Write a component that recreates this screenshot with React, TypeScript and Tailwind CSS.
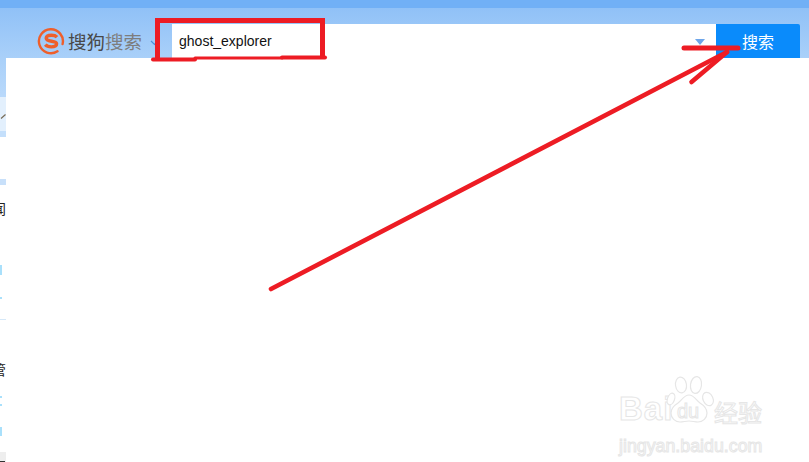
import React from 'react';

const stripMark = 'w-[2px] bg-[#a9e0fb]';

const SogouLogo = () => (
  <svg width="28" height="28" viewBox="0 0 28 28" className="shrink-0">
    <path d="M20.500 24.300A12 12 0 1 1 25.600 17" fill="none" stroke="#ee5f2b" strokeWidth="2.400" strokeLinecap="round" />
    <path d="M20 10.200c-1-1.100-3-1.900-5.600-1.900-3 0-5.200 1.200-5.200 3 0 4 10.400 1.900 10.400 5.500 0 1.900-2.200 3.100-5.300 3.100-2.600 0-4.800-.8-6-2.200" fill="none" stroke="#ee5f2b" strokeWidth="3.400" />
  </svg>
);

const PawIcon = () => (
  <svg width="50" height="52" viewBox="0 0 50 52" className="shrink-0" fill="#fff" stroke="#e6e6e6" strokeWidth="1.200">
    <ellipse cx="15" cy="10" rx="5.500" ry="8" transform="rotate(-8 15 10)" />
    <ellipse cx="30" cy="10" rx="5.500" ry="8.500" transform="rotate(8 30 10)" />
    <ellipse cx="42" cy="24" rx="5" ry="7" transform="rotate(-25 42 24)" />
    <ellipse cx="5" cy="24" rx="3.500" ry="6" transform="rotate(20 5 24)" />
    <path d="M23 20c5 0 7 5 11 8 4 2.500 7 6 7 10 0 5-4 9-9 9-3 0-6-1-9-1s-6 1-9 1c-5 0-9-4-9-9 0-4 3-7.500 7-10 4-3 6-8 11-8z" />
  </svg>
);

const Watermark = () => (
  <div className="absolute left-[619px] top-[375px] w-[150px] font-['Liberation_Sans',sans-serif] text-transparent [-webkit-text-stroke:1px_#e6e6e6]">
    <div className="flex items-end h-[52px]">
      <span className="text-[33px] leading-[36px] font-bold tracking-[1px] w-[54px] shrink-0">Bai</span>
      <div className="relative -ml-[7px] shrink-0">
        <PawIcon />
        <span className="absolute left-[11px] top-[25px] text-[20px] leading-[22px]">du</span>
      </div>
      <span className="-ml-[2px] text-[24px] leading-[30px] font-['Noto_Sans_CJK_SC',sans-serif]">经验</span>
    </div>
    <p className="mt-[9px] text-[17.800px] leading-[20px] whitespace-nowrap">jingyan.baidu.com</p>
  </div>
);

// red marker strokes drawn on top of the screenshot
const Annotations = () => (
  <svg width="809" height="462" className="absolute left-0 top-0 pointer-events-none" fill="none" stroke="#ed1c24" strokeLinecap="round" strokeLinejoin="round">
    <path d="M157.500 20.500H322.500V57" strokeWidth="5" strokeLinecap="butt" strokeLinejoin="miter" />
    <path d="M157.500 18V59" strokeWidth="5" strokeLinecap="butt" />
    <path d="M153 59.500H195" strokeWidth="4" />
    <path d="M195 58H282" strokeWidth="3" />
    <path d="M282 57.500H325" strokeWidth="4" />
    <path d="M271 289L727 52" strokeWidth="4.600" />
    <path d="M691.500 82L727 52" strokeWidth="4.600" />
    <path d="M684 48H738" strokeWidth="5" />
  </svg>
);

const LeftStrip = () => (
  <div className="w-[6px] shrink-0 flex flex-col overflow-hidden h-full bg-white font-['Noto_Sans_CJK_SC',sans-serif] text-[#222]">
    <div className="h-[39px] shrink-0 bg-gradient-to-b from-[#a9d0f9] to-[#b9d9fb]" />
    <div className="h-[34px] shrink-0 bg-[#e3f0fd] flex items-start justify-end pt-[16px]">
      <svg width="6" height="6" viewBox="0 0 6 6" className="shrink-0">
        <path d="M1 5.500L5.500 1.500" stroke="#776a55" strokeWidth="1.200" />
      </svg>
    </div>
    <div className="h-[6px] shrink-0 bg-[#c4dffb]" />
    <div className="h-[42px] shrink-0" />
    <div className="h-[6px] shrink-0 bg-[#c8e0fa]" />
    <div className="h-[15px] shrink-0" />
    <div className="h-[16px] shrink-0 flex justify-end text-[14px] leading-[16px]">
      <span className="shrink-0 w-[14px]">闻</span>
    </div>
    <div className="h-[49px] shrink-0" />
    <div className={`h-[10px] shrink-0 ${stripMark}`} />
    <div className="h-[22px] shrink-0" />
    <div className={`h-[2px] shrink-0 ${stripMark}`} />
    <div className="h-[20px] shrink-0" />
    <div className="h-px shrink-0 bg-[#d5e8f8]" />
    <div className="h-[41px] shrink-0" />
    <div className="h-[16px] shrink-0 flex justify-end text-[14px] leading-[16px]">
      <span className="shrink-0 w-[14px]">管</span>
    </div>
    <div className="h-[19px] shrink-0" />
    <div className={`h-[2px] shrink-0 ${stripMark}`} />
    <div className="h-[6px] shrink-0" />
    <div className={`h-[2px] shrink-0 ${stripMark}`} />
    <div className="h-[21px] shrink-0" />
    <div className={`h-[9px] shrink-0 ${stripMark}`} />
    <div className="h-[16px] shrink-0" />
    <div className="h-[12px] shrink-0 bg-[#eeeeee] flex items-end">
      <div className="w-[5px] h-px mb-[2px] bg-[#333]" />
    </div>
  </div>
);

const App: React.FC = () => {
  return (
    <div className="relative w-[809px] h-[462px] overflow-hidden bg-white flex flex-col font-['Liberation_Sans',sans-serif]">
      <div className="h-[8px] shrink-0 bg-[#71b0f6]" />
      <div className="h-[50px] shrink-0 flex items-end bg-gradient-to-b from-[#90c1f7] to-[#a9d0f9] pl-[37px] pr-[9px]">
        <div className="flex items-center self-start mt-[19px]">
          <SogouLogo />
          <span className="ml-[3px] text-[18.500px] leading-[28px] font-['Noto_Sans_CJK_SC',sans-serif] text-[#484848]">搜狗</span>
          <span className="text-[18.500px] leading-[28px] font-['Noto_Sans_CJK_SC',sans-serif] text-[#7d7d7d]">搜索</span>
          <svg width="10" height="6" viewBox="0 0 10 6" className="ml-[8px] mt-[3px] shrink-0">
            <path d="M1 1L4.500 4.500L8 1" fill="none" stroke="#4b8fd8" strokeWidth="1.200" />
          </svg>
        </div>
        <div className="ml-[12px] flex-1 h-[34px] bg-white flex items-center justify-between pl-[7px] pr-[11px]">
          <span className="text-[14px] leading-[18px] text-[#111]">ghost_explorer</span>
          <div className="w-0 h-0 border-x-[5px] border-x-transparent border-t-[6px] border-t-[#6ea6ea] mt-[2px]" />
        </div>
        <button className="w-[84px] h-[34px] bg-[#0a8bfb] rounded-tr-[2px] text-white text-[16px] font-['Noto_Sans_CJK_SC',sans-serif]">
          搜索
        </button>
      </div>
      <div className="flex-1 min-h-0 flex">
        <LeftStrip />
        <div className="flex-1 bg-white" />
      </div>
      <Watermark />
      <Annotations />
    </div>
  );
};

export default App;
